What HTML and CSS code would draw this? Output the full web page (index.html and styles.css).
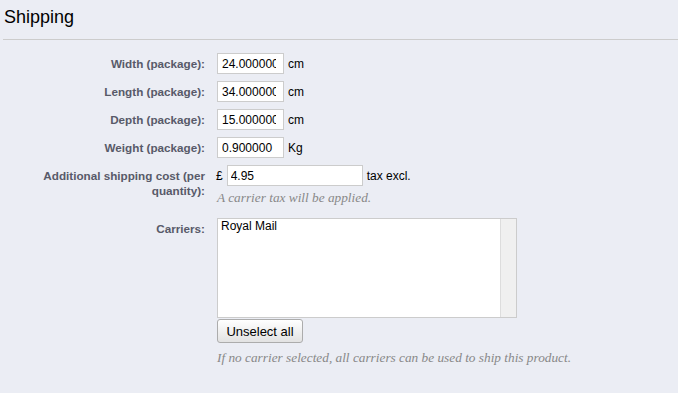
FILE: index.html
```html
<!DOCTYPE html>
<html lang="en">
<head>
<meta charset="utf-8"/>
<title>Shipping</title>
<link rel="stylesheet" href="styles.css">
</head>
<body>
<h3 class="tab-title">Shipping</h3>
<div class="separation"></div>
<div class="shipping-form">
  <div class="row">
    <label class="row-label" for="width">Width (package):</label>
    <div class="field">
      <div class="inline">
        <input class="input-small" id="width" type="text" value="24.000000"/>
        <span class="unit">cm</span>
      </div>
    </div>
  </div>
  <div class="row">
    <label class="row-label" for="height">Length (package):</label>
    <div class="field">
      <div class="inline">
        <input class="input-small" id="height" type="text" value="34.000000"/>
        <span class="unit">cm</span>
      </div>
    </div>
  </div>
  <div class="row">
    <label class="row-label" for="depth">Depth (package):</label>
    <div class="field">
      <div class="inline">
        <input class="input-small" id="depth" type="text" value="15.000000"/>
        <span class="unit">cm</span>
      </div>
    </div>
  </div>
  <div class="row">
    <label class="row-label" for="weight">Weight (package):</label>
    <div class="field">
      <div class="inline">
        <input class="input-small" id="weight" type="text" value="0.900000"/>
        <span class="unit">Kg</span>
      </div>
    </div>
  </div>
  <div class="row">
    <label class="row-label" for="additional">Additional shipping cost (per quantity):</label>
    <div class="field">
      <div class="inline">
        <span class="currency">£</span>
        <input class="input-wide" id="additional" type="text" value="4.95"/>
        <span class="unit">tax excl.</span>
      </div>
      <p class="hint hint-tax">A carrier tax will be applied.</p>
    </div>
  </div>
  <div class="row">
    <label class="row-label">Carriers:</label>
    <div class="field">
      <div class="carrier-list">
        <div class="carrier-options">
          <div class="carrier-option">Royal Mail</div>
        </div>
        <div class="carrier-scroll"></div>
      </div>
      <button class="button" type="button">Unselect all</button>
      <p class="hint hint-carriers">If no carrier selected, all carriers can be used to ship this product.</p>
    </div>
  </div>
</div>
</body>
</html>
```
FILE: styles.css
```css
html, body {
  margin: 0;
  background: #ebedf4;
  color: #000;
  font-family: "Liberation Sans", Arial, sans-serif;
  font-size: 12px;
}
.tab-title {
  margin: 0;
  padding: 6px 0 0 4px;
  font-size: 18px;
  font-weight: normal;
  line-height: 22px;
}
.separation {
  margin: 11px 0 0 3px;
  height: 1px;
  background: #cccccc;
}
.shipping-form {
  padding-top: 13px;
}
.row {
  display: flex;
  gap: 12px;
  margin-bottom: 7px;
}
.row-label {
  flex: 0 0 205px;
  padding-top: 3px;
  text-align: right;
  font-weight: bold;
  font-size: 11.7px;
  line-height: 15px;
  color: #585a69;
}
.field {
  display: flex;
  flex-direction: column;
  align-items: flex-start;
}
.inline {
  display: flex;
  align-items: center;
}
input {
  box-sizing: border-box;
  height: 21px;
  margin: 0;
  padding: 0 3px;
  border: 1px solid #cccccc;
  background: #fff;
  font-family: "Liberation Sans", Arial, sans-serif;
  font-size: 12px;
  color: #000;
}
.input-small {
  width: 67px;
  padding: 0 7px 0 4px;
}
.input-wide {
  width: 136px;
}
.unit {
  margin-left: 4px;
}
.currency {
  margin: 0 4px 0 -1px;
}
.hint {
  margin: 4px 0 0;
  font-family: "Liberation Serif", "Times New Roman", serif;
  font-style: italic;
  font-size: 13.3px;
  line-height: 15px;
  color: #888888;
}
.hint-tax {
  margin-bottom: 6px;
}
.hint-carriers {
  margin-top: 7px;
}
.carrier-list {
  display: flex;
  box-sizing: border-box;
  width: 300px;
  height: 100px;
  border: 1px solid #cccccc;
  background: #fff;
}
.carrier-options {
  flex: 1;
  padding: 0 3px;
}
.carrier-option {
  line-height: 15px;
}
.carrier-scroll {
  width: 15px;
  background: #f0f0f0;
  border-left: 1px solid #dddddd;
}
.button {
  box-sizing: border-box;
  width: 86px;
  height: 24px;
  margin-top: 1px;
  padding: 0;
  border: 1px solid #acacac;
  border-radius: 3px;
  background: linear-gradient(#ffffff, #e2e2e2);
  font-family: "Liberation Sans", Arial, sans-serif;
  font-size: 13px;
  color: #000;
}
```
